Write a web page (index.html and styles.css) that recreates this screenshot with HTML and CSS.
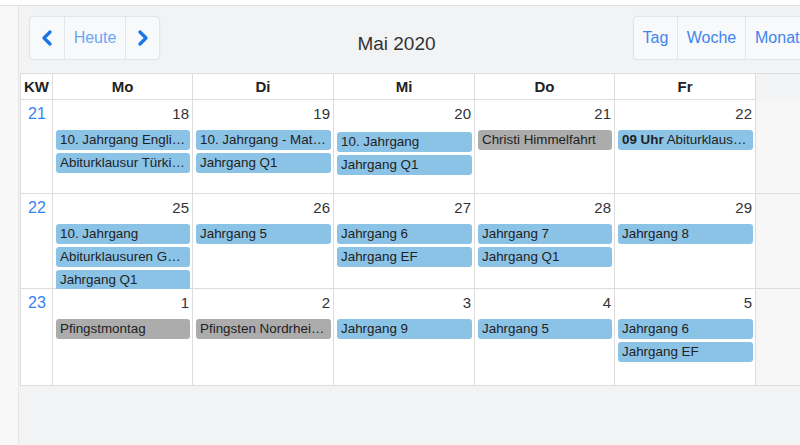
FILE: index.html
```html
<!DOCTYPE html>
<html lang="de">
<head>
<meta charset="utf-8">
<title>Kalender</title>
<link rel="stylesheet" href="styles.css">
</head>
<body>
<div class="topbar"></div>
<div class="main">
  <div class="side"></div>
  <div class="content">
    <div class="toolbar">
      <div class="btn-group">
        <button class="btn icon" aria-label="zurück"><svg width="12" height="16" viewBox="0 0 12 16"><path d="M9 2 L3 8 L9 14" fill="none" stroke="#1a73e8" stroke-width="3.2" stroke-linecap="round" stroke-linejoin="round"/></svg></button>
        <button class="btn today">Heute</button>
        <button class="btn icon" aria-label="weiter"><svg width="12" height="16" viewBox="0 0 12 16"><path d="M3 2 L9 8 L3 14" fill="none" stroke="#1a73e8" stroke-width="3.2" stroke-linecap="round" stroke-linejoin="round"/></svg></button>
      </div>
      <h2 class="title">Mai 2020</h2>
      <div class="btn-group right">
        <button class="btn view">Tag</button>
        <button class="btn view">Woche</button>
        <button class="btn view">Monat</button>
      </div>
    </div>

    <div class="cal">
      <div class="head kw">KW</div>
      <div class="head">Mo</div>
      <div class="head">Di</div>
      <div class="head">Mi</div>
      <div class="head">Do</div>
      <div class="head">Fr</div>
      <div class="head weekend"></div>

      <div class="wk">21</div>
      <div class="day"><div class="num">18</div>
        <div class="ev">10. Jahrgang Englisch</div>
        <div class="ev">Abiturklausur Türkisch</div></div>
      <div class="day"><div class="num">19</div>
        <div class="ev">10. Jahrgang - Mathematik</div>
        <div class="ev">Jahrgang Q1</div></div>
      <div class="day"><div class="num">20</div>
        <div class="ev down">10. Jahrgang</div>
        <div class="ev">Jahrgang Q1</div></div>
      <div class="day"><div class="num">21</div>
        <div class="ev hol">Christi Himmelfahrt</div></div>
      <div class="day"><div class="num">22</div>
        <div class="ev"><b>09 Uhr</b> Abiturklausuren Deutsch</div></div>
      <div class="day weekend"></div>

      <div class="wk">22</div>
      <div class="day"><div class="num">25</div>
        <div class="ev">10. Jahrgang</div>
        <div class="ev">Abiturklausuren Geschichte</div>
        <div class="ev">Jahrgang Q1</div></div>
      <div class="day"><div class="num">26</div>
        <div class="ev">Jahrgang 5</div></div>
      <div class="day"><div class="num">27</div>
        <div class="ev">Jahrgang 6</div>
        <div class="ev">Jahrgang EF</div></div>
      <div class="day"><div class="num">28</div>
        <div class="ev">Jahrgang 7</div>
        <div class="ev">Jahrgang Q1</div></div>
      <div class="day"><div class="num">29</div>
        <div class="ev">Jahrgang 8</div></div>
      <div class="day weekend"></div>

      <div class="wk">23</div>
      <div class="day"><div class="num">1</div>
        <div class="ev hol">Pfingstmontag</div></div>
      <div class="day"><div class="num">2</div>
        <div class="ev hol">Pfingsten Nordrhein-Westfalen</div></div>
      <div class="day"><div class="num">3</div>
        <div class="ev">Jahrgang 9</div></div>
      <div class="day"><div class="num">4</div>
        <div class="ev">Jahrgang 5</div></div>
      <div class="day"><div class="num">5</div>
        <div class="ev">Jahrgang 6</div>
        <div class="ev">Jahrgang EF</div></div>
      <div class="day weekend"></div>
    </div>
  </div>
</div>
</body>
</html>
```

FILE: styles.css
```css
* { box-sizing: border-box; }
html, body { margin: 0; padding: 0; }
body {
  width: 800px;
  height: 445px;
  overflow: hidden;
  background: #f8f8f8;
  font-family: "Liberation Sans", Arial, sans-serif;
  color: #333;
}
.topbar {
  height: 6px;
  background: #fff;
  border-bottom: 1px solid #e2e2e2;
}
.main {
  display: flex;
  height: 439px;
}
.side {
  width: 19px;
  flex: none;
  border-right: 1px solid #e6e6e6;
  background: #f8f8f8;
}
.content {
  flex: none;
  width: 800px;
  background: #f2f3f4;
  padding: 11px 0 0 1px;
  display: flex;
  flex-direction: column;
}
.toolbar {
  display: flex;
  align-items: center;
  height: 42px;
  padding-left: 10px;
  margin-bottom: 14px;
}
.btn-group {
  display: flex;
  height: 42px;
  background: #f8f9fa;
  border-radius: 3px;
  box-shadow: 0 0 2px rgba(0,0,0,0.22);
}
.btn {
  border: 0;
  background: transparent;
  font-family: inherit;
  font-size: 16px;
  padding: 0;
  display: flex;
  align-items: center;
  justify-content: center;
  border-left: 1px solid #e4e5e7;
}
.btn:first-child { border-left: 0; }
.btn.icon { width: 34px; }
.btn.today { width: 61px; color: #6aa7f5; }
.btn.view { color: #3d86f0; }
.btn.view:nth-child(1) { width: 43px; }
.btn.view:nth-child(2) { width: 68px; }
.btn.view:nth-child(3) { width: 66px; justify-content: flex-start; padding-left: 9px; }
.title {
  flex: 1;
  text-align: center;
  margin: 0;
  font-size: 19px;
  font-weight: normal;
  color: #333;
  padding-top: 12px;
}
.right { margin-right: 8px; }
.cal {
  display: grid;
  grid-template-columns: 32px 140px 141px 141px 140px 141px 1fr;
  grid-template-rows: 26px 94px 95px 97px;
  border-top: 1px solid #ddd;
  width: 799px;
}
.head {
  background: #fff;
  font-weight: bold;
  font-size: 15px;
  display: flex;
  align-items: center;
  justify-content: center;
  border-left: 1px solid #ddd;
  border-bottom: 1px solid #ddd;
  color: #222;
}
.head.weekend {
  background: transparent;
  border-bottom: 0;
}
.wk {
  background: #fff;
  border-left: 1px solid #ddd;
  border-bottom: 1px solid #ddd;
  color: #3584f2;
  font-size: 16px;
  padding: 5px 0 0 7px;
}
.day {
  background: #fff;
  border-left: 1px solid #ddd;
  border-bottom: 1px solid #ddd;
  padding: 0 2px 0 3px;
  display: flex;
  flex-direction: column;
  gap: 3px;
  min-width: 0;
}
.day.weekend { background: #f6f6f6; }
.num {
  text-align: right;
  font-size: 15px;
  padding: 5px 1px 0 0;
  height: 27px;
  flex: none;
  color: #333;
}
.ev {
  background: #8bc3e7;
  border-radius: 3px;
  height: 20px;
  line-height: 20px;
  font-size: 13.4px;
  padding: 0 3px 0 4px;
  white-space: nowrap;
  overflow: hidden;
  text-overflow: ellipsis;
  color: #222;
  flex: none;
}
.ev.down { margin-top: 2px; }
.ev.hol { background: #acacac; }
```
